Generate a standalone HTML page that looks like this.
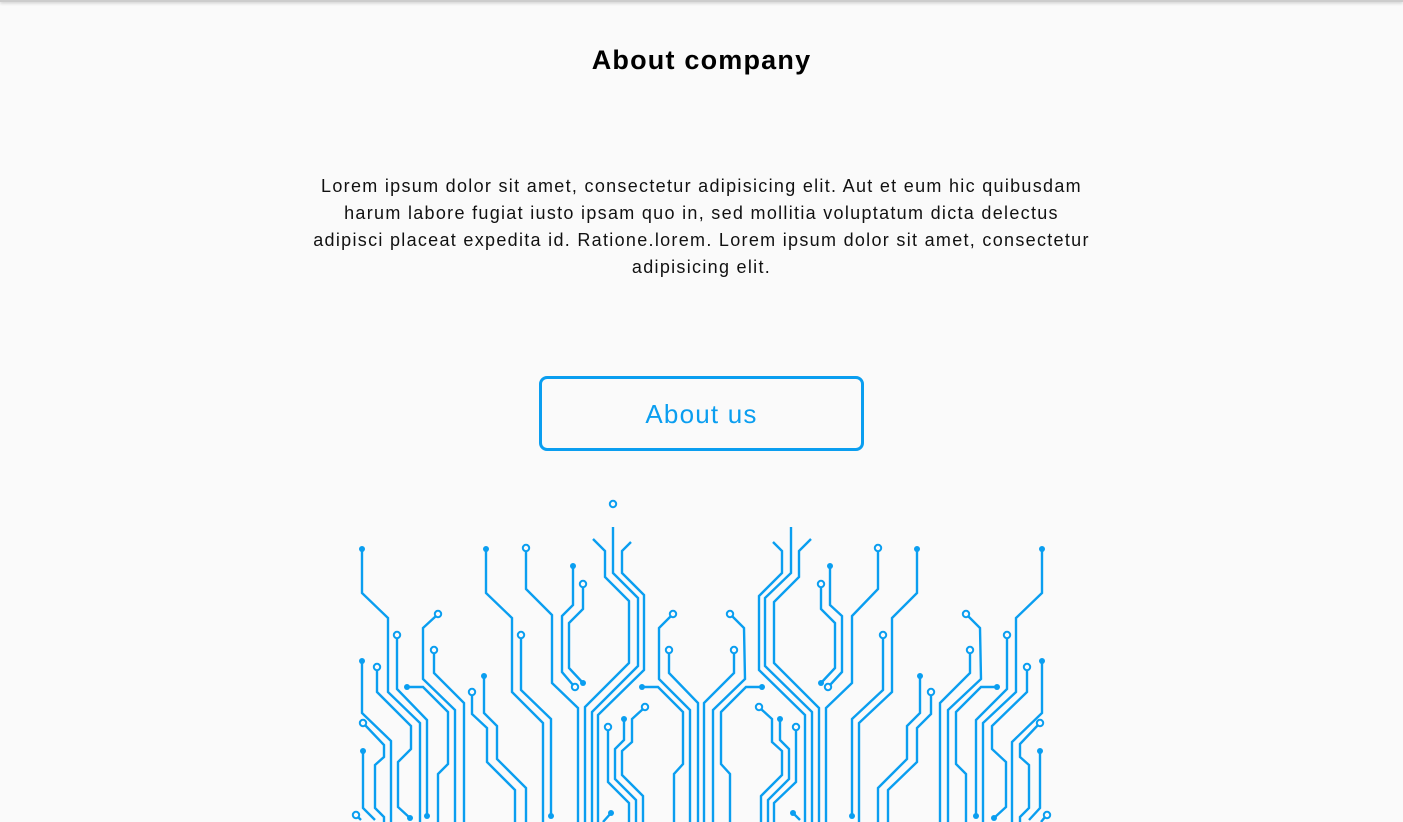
<!DOCTYPE html>
<html><head><meta charset="utf-8"><style>
html,body{margin:0;padding:0;width:1403px;height:822px;overflow:hidden;background:#fafafa;font-family:"Liberation Sans",sans-serif;position:relative}
.top{position:absolute;left:0;top:0;width:1403px;height:2px;background:#ccc;box-shadow:0 1px 3px rgba(0,0,0,.25)}
h1{position:absolute;left:0;width:1403px;top:45px;margin:0;text-align:center;font-size:27px;font-weight:bold;color:#000;letter-spacing:1.2px}
p{position:absolute;left:313px;width:777px;top:173px;margin:0;text-align:center;font-size:18px;line-height:27px;color:#111;letter-spacing:1.3px}
.btn{position:absolute;left:539px;top:376px;width:319px;height:69px;border:3px solid #0a9ef0;border-radius:8px;color:#0a9ef0;font-size:26px;text-align:center;line-height:70px;letter-spacing:1.2px}
svg{position:absolute;left:0;top:0}
</style></head><body>
<div class="top"></div>
<h1>About company</h1>
<p>Lorem ipsum dolor sit amet, consectetur adipisicing elit. Aut et eum hic quibusdam harum labore fugiat iusto ipsam quo in, sed mollitia voluptatum dicta delectus adipisci placeat expedita id. Ratione.lorem. Lorem ipsum dolor sit amet, consectetur adipisicing elit.</p>
<div class="btn">About us</div>
<svg width="1403" height="822" viewBox="0 0 1403 822">
<g fill="none" stroke="#0a9ef0" stroke-width="2.4" stroke-linejoin="miter">
<polyline points="362,549 362,593 388,618 388,692 420,723 420,822"/>
<polyline points="397,638 397,689 427,720 427,816"/>
<polyline points="436,616 423,628 423,679 455,710 455,822"/>
<polyline points="434,653 434,673 464,703 464,822"/>
<polyline points="407,687 423,687 448,712 448,764 438,774 438,822"/>
<polyline points="362,661 362,713 391,741 391,822"/>
<polyline points="377,670 377,692 411,726 411,749 398,762 398,807 410,818"/>
<polyline points="365,725 384,745 384,757 375,765 375,808 384,817 384,822"/>
<polyline points="363,751 363,808 375,820"/>
<polyline points="358,817 361,820"/>
<polyline points="486,549 486,593 512,618 512,692 543,723 543,822"/>
<polyline points="526,551 526,589 552,615 552,683 578,708 578,822"/>
<polyline points="521,638 521,690 551,719 551,816"/>
<polyline points="484,676 484,713 497,726 497,759 526,788 526,822"/>
<polyline points="472,695 472,714 487,728 487,762 515,790 515,822"/>
<polyline points="573,566 573,605 562,616 562,672 573,685"/>
<polyline points="583,587 583,609 569,623 569,668 583,683"/>
<polyline points="613,527 613,573 638,598 638,666 592,712 592,822"/>
<polyline points="593,539 605,551 605,577 629,601 629,663 585,707 585,822"/>
<polyline points="631,542 622,551 622,573 644,595 644,670 598,715 598,822"/>
<polyline points="671,616 659,628 659,679 690,710 690,822"/>
<polyline points="669,653 669,673 698,703 698,822"/>
<polyline points="642,687 658,687 683,712 683,764 674,774 674,822"/>
<polyline points="608,730 608,782 629,803 629,822"/>
<polyline points="624,719 624,740 615,749 615,779 636,800 636,822"/>
<polyline points="643,709 632,719 632,742 622,751 622,775 643,796 643,822"/>
<polyline points="611,813 603,822"/>
<polyline points="791,527 791,573 765,598 765,666 812,712 812,822"/>
<polyline points="773,542 782,551 782,573 759,596 759,670 805,715 805,822"/>
<polyline points="811,539 799,551 799,577 774,602 774,663 819,708 819,822"/>
<polyline points="821,587 821,609 835,623 835,668 821,683"/>
<polyline points="830,566 830,605 842,616 842,672 830,685"/>
<polyline points="878,551 878,589 852,616 852,683 826,708 826,822"/>
<polyline points="917,549 917,593 892,618 892,692 859,723 859,822"/>
<polyline points="883,638 883,690 852,719 852,816"/>
<polyline points="732,616 744,628 745,679 713,710 713,822"/>
<polyline points="734,653 734,673 704,703 704,822"/>
<polyline points="762,687 746,687 721,712 721,764 730,774 730,822"/>
<polyline points="761,709 772,719 772,742 782,751 782,775 761,796 761,822"/>
<polyline points="780,719 780,740 789,749 789,779 768,800 768,822"/>
<polyline points="796,730 796,782 774,803 774,822"/>
<polyline points="793,813 800,820"/>
<polyline points="920,676 920,713 907,726 907,759 878,788 878,822"/>
<polyline points="931,695 931,714 917,728 917,762 888,790 888,822"/>
<polyline points="968,616 980,628 981,679 948,710 948,822"/>
<polyline points="970,653 970,673 940,703 940,822"/>
<polyline points="997,687 981,687 956,712 956,764 966,774 966,822"/>
<polyline points="1042,549 1042,593 1016,618 1016,692 983,723 983,822"/>
<polyline points="1007,638 1007,689 976,720 976,816"/>
<polyline points="1027,670 1027,692 992,726 992,749 1006,762 1006,807 994,818"/>
<polyline points="1042,661 1042,713 1012,742 1012,822"/>
<polyline points="1038,725 1020,744 1020,757 1029,765 1029,808 1020,817 1020,822"/>
<polyline points="1040,751 1040,808 1029,820"/>
<polyline points="1045,817 1041,822"/>
</g>
<g fill="#fafafa" stroke="#0a9ef0" stroke-width="2">
<circle cx="613" cy="504" r="3.2"/><circle cx="397" cy="635" r="3.2"/><circle cx="438" cy="614" r="3.2"/><circle cx="434" cy="650" r="3.2"/><circle cx="377" cy="667" r="3.2"/><circle cx="363" cy="723" r="3.2"/><circle cx="356" cy="815" r="3.2"/><circle cx="526" cy="548" r="3.2"/><circle cx="521" cy="635" r="3.2"/><circle cx="472" cy="692" r="3.2"/><circle cx="575" cy="687" r="3.2"/><circle cx="583" cy="584" r="3.2"/><circle cx="673" cy="614" r="3.2"/><circle cx="669" cy="650" r="3.2"/><circle cx="608" cy="727" r="3.2"/><circle cx="645" cy="707" r="3.2"/>
<circle cx="821" cy="584" r="3.2"/><circle cx="828" cy="687" r="3.2"/><circle cx="878" cy="548" r="3.2"/><circle cx="883" cy="635" r="3.2"/><circle cx="730" cy="614" r="3.2"/><circle cx="734" cy="650" r="3.2"/><circle cx="759" cy="707" r="3.2"/><circle cx="796" cy="727" r="3.2"/><circle cx="931" cy="692" r="3.2"/><circle cx="966" cy="614" r="3.2"/><circle cx="970" cy="650" r="3.2"/><circle cx="1007" cy="635" r="3.2"/><circle cx="1027" cy="667" r="3.2"/><circle cx="1040" cy="723" r="3.2"/><circle cx="1047" cy="815" r="3.2"/>
</g>
<g fill="#0a9ef0">
<circle cx="362" cy="549" r="3"/><circle cx="427" cy="816" r="3"/><circle cx="407" cy="687" r="3"/><circle cx="362" cy="661" r="3"/><circle cx="410" cy="818" r="3"/><circle cx="363" cy="751" r="3"/><circle cx="486" cy="549" r="3"/><circle cx="551" cy="816" r="3"/><circle cx="484" cy="676" r="3"/><circle cx="573" cy="566" r="3"/><circle cx="583" cy="683" r="3"/><circle cx="642" cy="687" r="3"/><circle cx="624" cy="719" r="3"/><circle cx="611" cy="813" r="3"/>
<circle cx="821" cy="683" r="3"/><circle cx="830" cy="566" r="3"/><circle cx="917" cy="549" r="3"/><circle cx="852" cy="816" r="3"/><circle cx="762" cy="687" r="3"/><circle cx="780" cy="719" r="3"/><circle cx="793" cy="813" r="3"/><circle cx="920" cy="676" r="3"/><circle cx="997" cy="687" r="3"/><circle cx="1042" cy="549" r="3"/><circle cx="976" cy="816" r="3"/><circle cx="994" cy="818" r="3"/><circle cx="1042" cy="661" r="3"/><circle cx="1040" cy="751" r="3"/>
</g>
</svg>
</body></html>
